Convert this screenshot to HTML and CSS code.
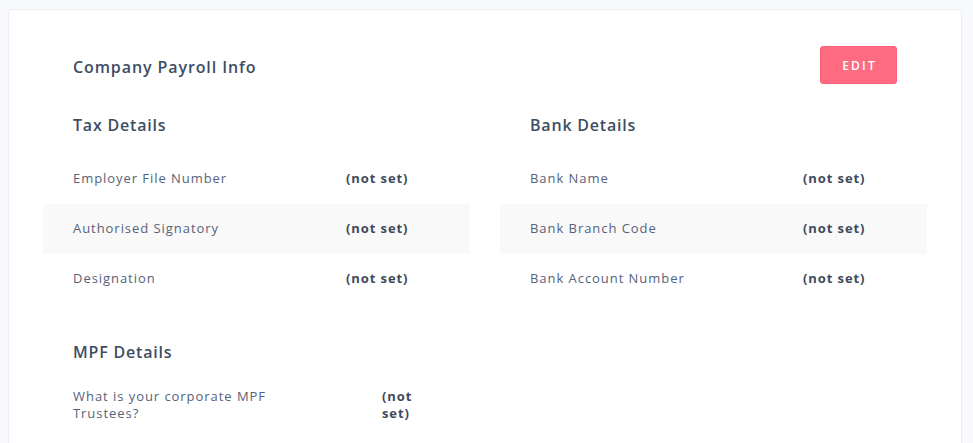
FILE: index.html
```html
<!DOCTYPE html>
<html>
<head>
<meta charset="utf-8">
<link rel="stylesheet" href="styles.css">
</head>
<body>
<div class="card">
  <div class="header">
    <h1 class="title">Company Payroll Info</h1>
    <button class="edit">EDIT</button>
  </div>
  <div class="columns">
    <div class="col">
      <h2 class="section">Tax Details</h2>
      <div class="row"><span class="label">Employer File Number</span><span class="value">(not set)</span></div>
      <div class="row alt"><span class="label">Authorised Signatory</span><span class="value">(not set)</span></div>
      <div class="row"><span class="label">Designation</span><span class="value">(not set)</span></div>
    </div>
    <div class="col">
      <h2 class="section">Bank Details</h2>
      <div class="row"><span class="label">Bank Name</span><span class="value">(not set)</span></div>
      <div class="row alt"><span class="label">Bank Branch Code</span><span class="value">(not set)</span></div>
      <div class="row"><span class="label">Bank Account Number</span><span class="value">(not set)</span></div>
    </div>
  </div>
  <div class="mpf">
    <h2 class="section">MPF Details</h2>
    <div class="mpf-row"><span class="mpf-label">What is your corporate MPF Trustees?</span><span class="mpf-value">(not set)</span></div>
  </div>
</div>
</body>
</html>
```
FILE: styles.css
```css
html, body { margin: 0; padding: 0; }
body {
  background: #f8f9fd;
  font-family: "Open Sans", "DejaVu Sans", sans-serif;
  color: #4f5d70;
  padding: 9px 11px 0 8px;
}
.card {
  background: #fff;
  border: 1px solid #eceef4;
  border-radius: 4px;
  padding: 35px 34px 40px 34px;
  min-height: 460px;
  box-sizing: border-box;
}
.header {
  display: flex;
  justify-content: space-between;
  align-items: center;
  padding: 0 30px;
  height: 40px;
}
.title {
  margin: 0;
  font-size: 16px;
  font-weight: 600;
  color: #3e4d63;
  letter-spacing: 0.9px;
  padding-top: 4px;
}
.edit {
  width: 77px;
  height: 38px;
  background: #ff6b81;
  border: 1px solid #ff5f77;
  border-radius: 3px;
  color: #fff;
  font-family: "Open Sans", sans-serif;
  font-size: 12px;
  font-weight: 600;
  letter-spacing: 2.2px;
  padding: 0 0 0 2px;
}
.columns {
  display: grid;
  grid-template-columns: 1fr 1fr;
  gap: 30px;
  margin-top: 18px;
}
.section {
  margin: 0;
  padding: 0 30px;
  font-size: 16px;
  font-weight: 600;
  color: #3e4d63;
  letter-spacing: 0.8px;
  height: 44px;
  line-height: 44px;
}
.columns .section { height: 51px; }
.row {
  display: grid;
  grid-template-columns: 273px 1fr;
  align-items: center;
  height: 50px;
  padding: 0 30px 2px;
  box-sizing: border-box;
  font-size: 13px;
}
.row.alt { background: #f9f9f9; }
.label { color: #56627a; letter-spacing: 0.95px; }
.value { font-weight: 700; color: #3e4a5c; letter-spacing: 0.9px; }
.mpf { margin-top: 26px; }
.mpf .section { height: 44px; }
.mpf-row {
  display: grid;
  grid-template-columns: 309px 40px;
  padding: 14px 30px 0 30px;
  font-size: 13px;
  line-height: 17px;
}
.mpf-label { color: #56627a; letter-spacing: 0.95px; max-width: 205px; }
.mpf-value { font-weight: 700; color: #3e4a5c; letter-spacing: 0.9px; }
```
